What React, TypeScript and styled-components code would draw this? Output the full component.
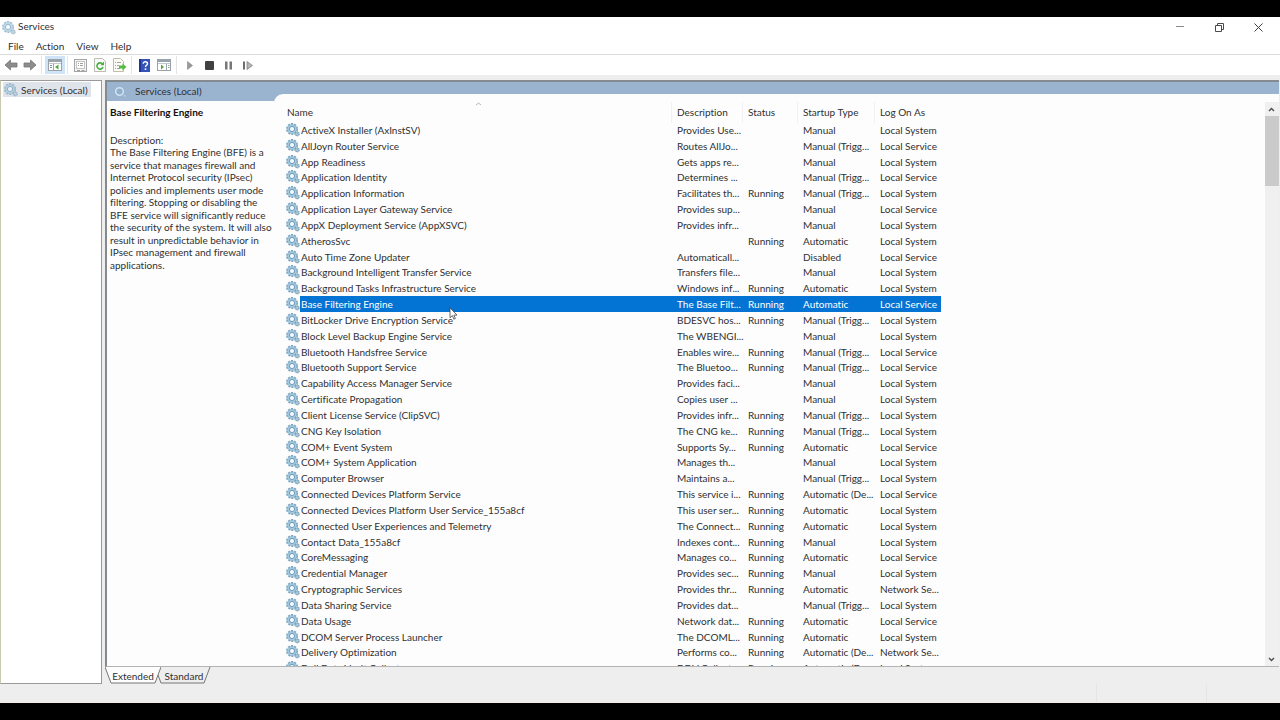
import React from 'react';
import styled, { createGlobalStyle } from 'styled-components';

const GlobalStyle = createGlobalStyle`
  * { box-sizing: border-box; }
  html, body { margin: 0; padding: 0; background: #000; }
  body, button, table {
    font-family: Lato, "Noto Sans", sans-serif;
    font-size: 10px;
    font-variant-ligatures: none;
    color: #303030;
  }
  button { background: none; border: 0; padding: 0; margin: 0; cursor: default; }
`;

const Screen = styled.div`
  height: 100vh;
  padding: 17px 0;
  background: #000;
  display: flex;
`;

const Window = styled.div`
  flex: 1;
  min-width: 0;
  display: flex;
  flex-direction: column;
  background: #eeeeef;
`;

const TitleBar = styled.header`
  height: 20px;
  display: flex;
  align-items: center;
  background: #fff;
  padding-left: 2px;
`;

const Title = styled.h1`
  flex: 1;
  margin: 0 0 0 2px;
  font-size: 10px;
  line-height: 14px;
  padding-bottom: 2px;
  font-weight: 400;
`;

const CaptionButton = styled.button`
  width: 39px;
  height: 20px;
  display: grid;
  place-items: center;
`;

const CaptionButtons = styled.div`
  display: flex;
  padding-right: 2px;
`;

const MenuBar = styled.nav`
  height: 18px;
  display: flex;
  align-items: center;
  gap: 12px;
  padding-left: 8px;
  background: #fff;
  border-bottom: 1px solid #dcdcdc;
`;

const MenuItem = styled.button`
  line-height: 16px;
`;

const ToolBar = styled.div`
  height: 20px;
  display: flex;
  align-items: center;
  padding-left: 1px;
  background: #fff;
`;

const ToolButton = styled.button<{ $active?: boolean; $wide?: boolean }>`
  width: ${(p) => (p.$wide ? 20 : 19)}px;
  height: 18px;
  display: grid;
  place-items: center;
  background: ${(p) => (p.$active ? '#cfe5f7' : 'transparent')};
`;

const Divider = styled.span`
  width: 1px;
  height: 18px;
  margin: 0 3px 0 2px;
  background: #e4e4e4;
`;

const Panes = styled.div`
  flex: 1;
  min-height: 0;
  display: grid;
  grid-template-columns: 102px minmax(0, 1fr);
  column-gap: 3px;
  padding: 5px 1px 0 0;
`;

const Tree = styled.aside`
  background: #fff;
  border: 1px solid #9a9a9a;
  border-left-color: #c9c9b4;
  padding: 1px 2px;
`;

const TreeItem = styled.button`
  height: 15px;
  display: flex;
  align-items: center;
  gap: 3px;
  padding: 0 3px 0 1px;
  background: #dfe3ea;
  white-space: nowrap;
`;

const Result = styled.main`
  min-width: 0;
  min-height: 0;
  display: flex;
  flex-direction: column;
`;

const Panel = styled.section`
  flex: 1;
  min-height: 0;
  display: grid;
  grid-template-columns: 167px minmax(0, 1fr);
  grid-template-rows: 12px minmax(0, 1fr);
  background: #9ab4d0;
  border: solid #858a90;
  border-width: 2px 0 1px 2px;
  border-bottom-color: #b4b4b4;
`;

const PanelTitle = styled.h2`
  grid-column: 1 / -1;
  height: 18px;
  margin: 0;
  padding-left: 6px;
  display: flex;
  align-items: center;
  gap: 7px;
  font-size: 10px;
  font-weight: 400;
`;

const Detail = styled.div`
  margin-top: 7px;
  padding: 4px 0 0 3px;
  background: #fdfdfe;
`;

const DetailTitle = styled.h3`
  margin: 0 0 15px;
  font-size: 10px;
  line-height: 14px;
  font-weight: 700;
  color: #111;
`;

const DetailText = styled.dl`
  margin: 0;
  display: grid;
  grid-template-rows: 12px 125px;
  line-height: 12px;
`;

const DetailBody = styled.dd`
  margin: 0;
  display: grid;
  grid-auto-rows: 1fr;
  white-space: nowrap;
`;

const ListArea = styled.div`
  min-height: 0;
  display: flex;
  padding-top: 8px;
  background: #fdfdfe;
  border-top-left-radius: 9px;
`;

const ListView = styled.div`
  flex: 1;
  min-width: 0;
  min-height: 0;
  overflow: hidden;
  padding-left: 12px;
`;

const Table = styled.table`
  display: block;
  border-collapse: collapse;
`;

const HeadRow = styled.tr`
  display: grid;
  grid-template-columns: 385px 71px 55px 77px 67px;
  height: 20px;
`;

const Head = styled.th<{ $first?: boolean }>`
  position: relative;
  padding: 0 0 0 ${(p) => (p.$first ? 1 : 5)}px;
  line-height: 21px;
  font-weight: 400;
  text-align: left;
  white-space: nowrap;
  border-left: ${(p) => (p.$first ? 0 : 1)}px solid #f1f1f3;
`;

const SortMark = styled.svg`
  position: absolute;
  top: 0;
  left: 50%;
  margin-left: -4px;
`;

const Body = styled.tbody`
  display: grid;
  grid-auto-rows: minmax(0, 1fr);
  height: 554px;
`;

const Row = styled.tr<{ $selected?: boolean }>`
  position: relative;
  z-index: ${(p) => (p.$selected ? 1 : 0)};
  display: grid;
  grid-template-columns: 14px 371px 71px 55px 77px 67px;
  grid-template-rows: minmax(0, 1fr);
  color: ${(p) => (p.$selected ? '#fff' : 'inherit')};
  td:not(:first-child) {
    background: ${(p) => (p.$selected ? '#0474d4' : 'transparent')};
  }
`;

const Cell = styled.td<{ $name?: boolean }>`
  padding: 0 0 0 ${(p) => (p.$name ? 1 : 6)}px;
  line-height: 17px;
  white-space: nowrap;
`;

const IconCell = styled.td`
  padding: 0;
  line-height: 0;
`;

const Pointer = styled.svg`
  position: absolute;
  left: 163px;
  top: 11px;
`;

const Scrollbar = styled.div`
  width: 14px;
  display: flex;
  flex-direction: column;
  background: #f0f0f1;
`;

const ScrollButton = styled.button`
  height: 14px;
  display: grid;
  place-items: center;
  padding-right: 2px;
`;

const Thumb = styled.div`
  height: 70px;
  background: #cacacb;
`;

const Track = styled.div`
  flex: 1;
`;

const Tabs = styled.div`
  height: 17px;
  display: flex;
`;

const Tab = styled.button<{ $active?: boolean }>`
  position: relative;
  z-index: ${(p) => (p.$active ? 1 : 0)};
  width: 56px;
  height: 17px;
  margin-right: -5px;
  line-height: 19px;
`;

const TabShape = styled.svg`
  position: absolute;
  inset: 0;
`;

const TabLabel = styled.span`
  position: relative;
`;

const StatusBar = styled.footer`
  height: 19px;
  display: grid;
  grid-template-columns: minmax(0, 1fr) 110px 73px;
  border-bottom: 1px solid #f3ebe4;
`;

const StatusPart = styled.div`
  border-right: 1px solid #e5e5e6;
  &:last-child { border-right: 0; }
`;

function Gears({ pale }: { pale?: boolean }) {
  return (
    <svg width="14" height="15" viewBox="0 0 14 15" aria-hidden="true" opacity={pale ? 0.7 : 1}>
      <circle cx="6" cy="7" r="5.200" fill="none" stroke="#7ba5c0" strokeWidth="1.600" strokeDasharray="2.100 1.167" />
      <circle cx="6" cy="7" r="4.600" fill="#a5cae0" stroke="#7ea9c4" strokeWidth="0.600" />
      <circle cx="6" cy="7" r="2.600" fill="#f2f8fc" stroke="#5f93b5" strokeWidth="0.900" />
      <circle cx="11.200" cy="11.800" r="2" fill="#a4c7db" stroke="#7a9db5" strokeWidth="1.200" strokeDasharray="1.200 0.400" />
    </svg>
  );
}

function Lens() {
  return (
    <svg width="15" height="15" viewBox="0 0 15 15" aria-hidden="true">
      <circle cx="6.500" cy="7.500" r="3.800" fill="#8fb0cf" stroke="#d3e4f1" strokeWidth="1.500" />
      <path d="M10.500 11.500h1.500v1.500" fill="none" stroke="#b5cce0" strokeWidth="1.200" />
    </svg>
  );
}

function Arrow({ flip }: { flip?: boolean }) {
  return (
    <svg width="14" height="12" viewBox="0 0 14 12" aria-hidden="true">
      <path
        transform={flip ? 'translate(14 0) scale(-1 1)' : undefined}
        d="M1 6 6.500 1v3H13v4H6.500v3Z"
        fill="#8d8d8d"
        stroke="#777"
        strokeWidth="0.800"
        strokeLinejoin="round"
      />
    </svg>
  );
}

function PaneIcon({ right }: { right?: boolean }) {
  return (
    <svg width="14" height="12" viewBox="0 0 14 12" aria-hidden="true">
      <rect x="0.500" y="0.500" width="13" height="11" fill="#fff" stroke="#9aa2a8" />
      <rect x="1" y="1" width="12" height="2" fill="#98a4ad" />
      <path d="M1 4.500h12" stroke="#c1c8cd" />
      <path d={right ? 'M9.500 5v6' : 'M5.500 5v6'} stroke="#9aa4ab" />
      {right ? (
        <>
          <path d="M4 5.500 7 8l-3 2.500Z" fill="#4cab3e" />
          <path d="M11 6.500h1.500M11 8.500h1.500" stroke="#8fa0ab" />
        </>
      ) : (
        <>
          <path d="M10.500 5.500v5l-3.500-2.500Z" fill="#4cab3e" />
          <path d="M2 6.500h2M2 8.500h2" stroke="#6f8fa8" />
        </>
      )}
    </svg>
  );
}

function PropertiesIcon() {
  return (
    <svg width="13" height="13" viewBox="0 0 13 13" aria-hidden="true">
      <rect x="0.500" y="0.500" width="12" height="12" fill="#f4f4f4" stroke="#a5a5a5" />
      <rect x="2.500" y="2.500" width="8" height="7" fill="#fff" stroke="#c4c4c4" />
      <path d="M4 4.500h1M6 4.500h3M4 6.500h1M6 6.500h3M3 11.500h3M7.500 11.500h3" stroke="#a0a0a0" />
    </svg>
  );
}

function RefreshIcon() {
  return (
    <svg width="12" height="14" viewBox="0 0 12 14" aria-hidden="true">
      <path d="M.5.500h8l3 3v10H.5Z" fill="#fafafa" stroke="#bdbdb4" />
      <path d="M8.600 6.200A3.100 3.100 0 1 0 9 9" fill="none" stroke="#47b13c" strokeWidth="1.600" />
      <path d="M10 3.500v3.800H6.400Z" fill="#47b13c" />
    </svg>
  );
}

function ExportIcon() {
  return (
    <svg width="14" height="14" viewBox="0 0 14 14" aria-hidden="true">
      <path d="M.5.500h7l3 3v10H.5Z" fill="#fbfaf3" stroke="#c2bda8" />
      <path d="M2 4.500h1M4 4.500h4M2 7.500h1M4 7.500h2M2 10.500h1M4 10.500h3" stroke="#9fa4ae" />
      <path d="M6 7.500H9.500V5.500l4 3.500-4 3.500v-2H6Z" fill="#53bd43" />
    </svg>
  );
}

function HelpIcon() {
  return (
    <svg width="11" height="13" viewBox="0 0 11 13" aria-hidden="true">
      <rect width="11" height="13" fill="#3453b8" />
      <path d="M0 0h2v13H0Z" fill="#1f3793" />
      <path d="M4.200 4.700c0-2.700 4.300-2.500 4.300 0 0 1.600-2 1.500-2 3.300" fill="none" stroke="#fff" strokeWidth="1.400" />
      <rect x="5.700" y="9.300" width="1.600" height="1.600" fill="#fff" />
    </svg>
  );
}

const D1 = 'Manual';
const D2 = 'Manual (Trigg...';
const D3 = 'Automatic';
const D4 = 'Automatic (De...';
const SYS = 'Local System';
const SVC = 'Local Service';
const NET = 'Network Se...';
const R = 'Running';

const services: [string, string, string, string, string][] = [
  ['ActiveX Installer (AxInstSV)', 'Provides Use...', '', D1, SYS],
  ['AllJoyn Router Service', 'Routes AllJo...', '', D2, SVC],
  ['App Readiness', 'Gets apps re...', '', D1, SYS],
  ['Application Identity', 'Determines ...', '', D2, SVC],
  ['Application Information', 'Facilitates th...', R, D2, SYS],
  ['Application Layer Gateway Service', 'Provides sup...', '', D1, SVC],
  ['AppX Deployment Service (AppXSVC)', 'Provides infr...', '', D1, SYS],
  ['AtherosSvc', '', R, D3, SYS],
  ['Auto Time Zone Updater', 'Automaticall...', '', 'Disabled', SVC],
  ['Background Intelligent Transfer Service', 'Transfers file...', '', D1, SYS],
  ['Background Tasks Infrastructure Service', 'Windows inf...', R, D3, SYS],
  ['Base Filtering Engine', 'The Base Filt...', R, D3, SVC],
  ['BitLocker Drive Encryption Service', 'BDESVC hos...', R, D2, SYS],
  ['Block Level Backup Engine Service', 'The WBENGI...', '', D1, SYS],
  ['Bluetooth Handsfree Service', 'Enables wire...', R, D2, SVC],
  ['Bluetooth Support Service', 'The Bluetoo...', R, D2, SVC],
  ['Capability Access Manager Service', 'Provides faci...', '', D1, SYS],
  ['Certificate Propagation', 'Copies user ...', '', D1, SYS],
  ['Client License Service (ClipSVC)', 'Provides infr...', R, D2, SYS],
  ['CNG Key Isolation', 'The CNG ke...', R, D2, SYS],
  ['COM+ Event System', 'Supports Sy...', R, D3, SVC],
  ['COM+ System Application', 'Manages th...', '', D1, SYS],
  ['Computer Browser', 'Maintains a...', '', D2, SYS],
  ['Connected Devices Platform Service', 'This service i...', R, D4, SVC],
  ['Connected Devices Platform User Service_155a8cf', 'This user ser...', R, D3, SYS],
  ['Connected User Experiences and Telemetry', 'The Connect...', R, D3, SYS],
  ['Contact Data_155a8cf', 'Indexes cont...', R, D1, SYS],
  ['CoreMessaging', 'Manages co...', R, D3, SVC],
  ['Credential Manager', 'Provides sec...', R, D1, SYS],
  ['Cryptographic Services', 'Provides thr...', R, D3, NET],
  ['Data Sharing Service', 'Provides dat...', '', D2, SYS],
  ['Data Usage', 'Network dat...', R, D3, SVC],
  ['DCOM Server Process Launcher', 'The DCOML...', R, D3, SYS],
  ['Delivery Optimization', 'Performs co...', R, D4, NET],
  ['Dell Data Vault Collector', 'DDV Collect...', R, D4, SYS],
];

const description = [
  'The Base Filtering Engine (BFE) is a',
  'service that manages firewall and',
  'Internet Protocol security (IPsec)',
  'policies and implements user mode',
  'filtering. Stopping or disabling the',
  'BFE service will significantly reduce',
  'the security of the system. It will also',
  'result in unpredictable behavior in',
  'IPsec management and firewall',
  'applications.',
];

export default function App() {
  return (
    <Screen>
      <GlobalStyle />
      <Window>
        <TitleBar>
          <Gears pale />
          <Title>Services</Title>
          <CaptionButtons>
            <CaptionButton aria-label="Minimize">
              <svg width="9" height="9" viewBox="0 0 9 9"><path d="M0 3.500h8" stroke="#8a8a8a" /></svg>
            </CaptionButton>
            <CaptionButton aria-label="Restore">
              <svg width="9" height="9" viewBox="0 0 9 9" fill="none" stroke="#4a4a4a"><path d="M.5 2.500h6v6h-6ZM2.500 2.500v-2h6v6h-2" /></svg>
            </CaptionButton>
            <CaptionButton aria-label="Close">
              <svg width="9" height="9" viewBox="0 0 9 9"><path d="m.5.500 8 8m0-8-8 8" stroke="#3d3d3d" /></svg>
            </CaptionButton>
          </CaptionButtons>
        </TitleBar>
        <MenuBar>
          <MenuItem>File</MenuItem>
          <MenuItem>Action</MenuItem>
          <MenuItem>View</MenuItem>
          <MenuItem>Help</MenuItem>
        </MenuBar>
        <ToolBar>
          <ToolButton aria-label="Back"><Arrow /></ToolButton>
          <ToolButton aria-label="Forward"><Arrow flip /></ToolButton>
          <Divider />
          <ToolButton $active $wide aria-label="Show console tree"><PaneIcon /></ToolButton>
          <Divider />
          <ToolButton aria-label="Properties"><PropertiesIcon /></ToolButton>
          <ToolButton $wide aria-label="Refresh"><RefreshIcon /></ToolButton>
          <ToolButton aria-label="Export list"><ExportIcon /></ToolButton>
          <Divider />
          <ToolButton aria-label="Help topics"><HelpIcon /></ToolButton>
          <ToolButton $wide aria-label="Show action pane"><PaneIcon right /></ToolButton>
          <Divider />
          <ToolButton $wide aria-label="Start service">
            <svg width="6" height="9" viewBox="0 0 6 9"><path d="M.5.500v8l5-4Z" fill="#999" stroke="#868686" strokeWidth="0.600" /></svg>
          </ToolButton>
          <ToolButton aria-label="Stop service">
            <svg width="9" height="9" viewBox="0 0 9 9"><rect width="9" height="9" rx="1" fill="#414141" /></svg>
          </ToolButton>
          <ToolButton aria-label="Pause service">
            <svg width="7" height="9" viewBox="0 0 7 9"><path d="M0 .500h2.500v8H0ZM4.500.500H7v8H4.500Z" fill="#777" /></svg>
          </ToolButton>
          <ToolButton $wide aria-label="Restart service">
            <svg width="10" height="9" viewBox="0 0 10 9"><path d="M0 .500h2v8H0Z" fill="#6d6d6d" /><path d="M4 .500v8l5.500-4Z" fill="#b5b5b5" stroke="#858585" strokeWidth="0.800" /></svg>
          </ToolButton>
        </ToolBar>
        <Panes>
          <Tree>
            <TreeItem><Gears pale />Services (Local)</TreeItem>
          </Tree>
          <Result>
            <Panel>
              <PanelTitle><Lens />Services (Local)</PanelTitle>
              <Detail>
                <DetailTitle>Base Filtering Engine</DetailTitle>
                <DetailText>
                  <dt>Description:</dt>
                  <DetailBody>
                    {description.map((line) => <span key={line}>{line}</span>)}
                  </DetailBody>
                </DetailText>
              </Detail>
              <ListArea>
                <ListView>
                  <Table>
                    <thead>
                      <HeadRow>
                        <Head $first>
                          Name
                          <SortMark width="7" height="4" viewBox="0 0 7 4"><path d="m1 3 2.500-2L6 3" fill="none" stroke="#b4b4b4" /></SortMark>
                        </Head>
                        <Head>Description</Head>
                        <Head>Status</Head>
                        <Head>Startup Type</Head>
                        <Head>Log On As</Head>
                      </HeadRow>
                    </thead>
                    <Body>
                      {services.map(([name, desc, status, startup, logon]) => {
                        const selected = name === 'Base Filtering Engine';
                        return (
                          <Row key={name} $selected={selected}>
                            <IconCell><Gears /></IconCell>
                            <Cell $name>
                              {name}
                              {selected && (
                                <Pointer width="9" height="13" viewBox="0 0 9 13">
                                  <path d="M1 .8v10l2.300-2.200 1.600 3.600 1.500-.7-1.600-3.400H8Z" fill="#fff" stroke="#444" strokeWidth="0.800" />
                                </Pointer>
                              )}
                            </Cell>
                            <Cell>{desc}</Cell>
                            <Cell>{status}</Cell>
                            <Cell>{startup}</Cell>
                            <Cell>{logon}</Cell>
                          </Row>
                        );
                      })}
                    </Body>
                  </Table>
                </ListView>
                <Scrollbar>
                  <ScrollButton aria-label="Scroll up">
                    <svg width="7" height="5" viewBox="0 0 7 5"><path d="m1 4 2.500-2.500L6 4" fill="none" stroke="#4c4c4c" strokeWidth="1.400" /></svg>
                  </ScrollButton>
                  <Thumb />
                  <Track />
                  <ScrollButton aria-label="Scroll down">
                    <svg width="7" height="5" viewBox="0 0 7 5"><path d="m1 1 2.500 2.500L6 1" fill="none" stroke="#4c4c4c" strokeWidth="1.400" /></svg>
                  </ScrollButton>
                </Scrollbar>
              </ListArea>
            </Panel>
            <Tabs>
              <Tab $active>
                <TabShape width="56" height="17" viewBox="0 0 56 17">
                  <path d="M0-1 6 16h44l6-17Z" fill="#fdfdfe" />
                  <path d="M0 0 6 16h44l6-16" fill="none" stroke="#777" />
                </TabShape>
                <TabLabel>Extended</TabLabel>
              </Tab>
              <Tab>
                <TabShape width="56" height="17" viewBox="0 0 56 17">
                  <path d="M2 8 5 16h43l6-16" fill="none" stroke="#777" />
                </TabShape>
                <TabLabel>Standard</TabLabel>
              </Tab>
            </Tabs>
          </Result>
        </Panes>
        <StatusBar>
          <StatusPart />
          <StatusPart />
          <StatusPart />
        </StatusBar>
      </Window>
    </Screen>
  );
}
